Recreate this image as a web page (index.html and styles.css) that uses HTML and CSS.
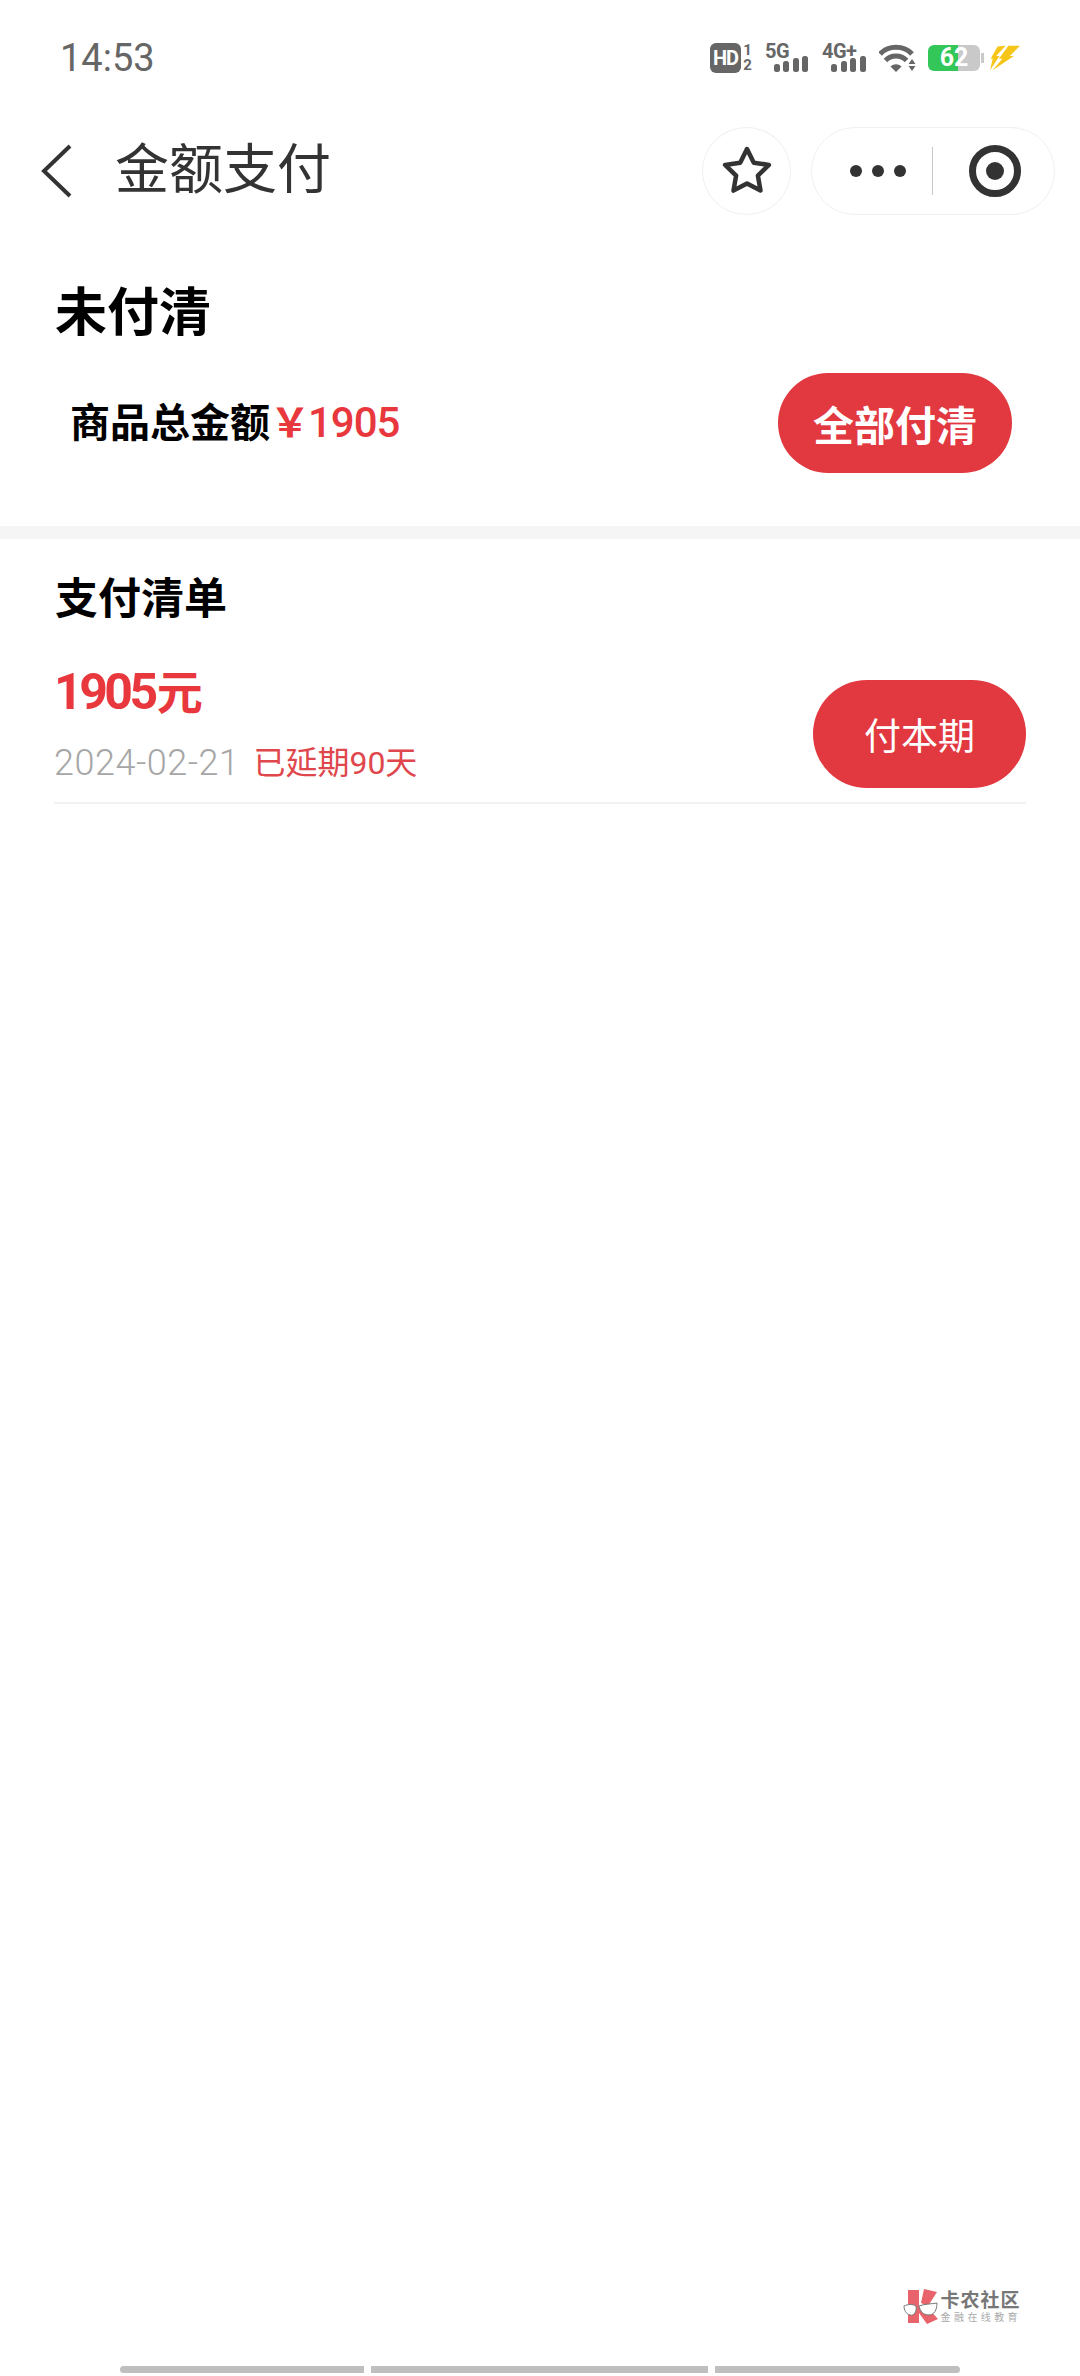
FILE: index.html
```html
<!DOCTYPE html>
<html lang="zh-CN">
<head>
  <meta charset="UTF-8">
  <meta name="viewport" content="width=device-width, initial-scale=1.0">
  <title>金额支付</title>
  <link rel="stylesheet" href="styles.css">
</head>
<body>
  <div class="page">
    <!-- status bar -->
    <div class="status">
      <span class="time">14:53</span>
      <div class="status-icons">
        <span class="hd">HD</span>
        <span class="sim"><span>1</span><span>2</span></span>
        <div class="signal signal-5g">
          <span class="net">5G</span>
          <svg width="44" height="30" viewBox="0 0 44 30">
            <rect x="9" y="21" width="6" height="8" rx="2.5"/>
            <rect x="18" y="18" width="6" height="11" rx="2.5"/>
            <rect x="28" y="15" width="6" height="14" rx="2.5"/>
            <rect x="37" y="13" width="6" height="16" rx="2.5"/>
          </svg>
        </div>
        <div class="signal signal-4g">
          <span class="net">4G+</span>
          <svg width="45" height="30" viewBox="0 0 45 30">
            <rect x="9" y="21" width="6" height="8" rx="2.5"/>
            <rect x="19" y="18" width="6" height="11" rx="2.5"/>
            <rect x="28" y="15" width="6" height="14" rx="2.5"/>
            <rect x="38" y="13" width="6" height="16" rx="2.5"/>
          </svg>
        </div>
        <svg class="wifi" width="38" height="30" viewBox="0 0 38 30">
          <path d="M1 11 C9 2 25 2 33 11" fill="none" stroke="#666" stroke-width="5"/>
          <path d="M6.500 17.500 C12 11.500 22 11.500 27.500 17.500" fill="none" stroke="#666" stroke-width="5"/>
          <path d="M11.500 23.500 C15 20.500 19 20.500 22.500 23.500 L17 29 Z" fill="#666"/>
          <path d="M33 16 L36.5 21 L29.500 21 Z M29.500 23 L36.500 23 L33 28 Z" fill="#666"/>
        </svg>
        <span class="battery">62</span>
        <svg class="bolt" width="30" height="26" viewBox="0 0 88 72">
          <path d="M22 2 L46 0 L18 30 L28 30 L0 72 L8 38 L2 38 Z" fill="#f5c518"/>
          <path d="M54 0 L88 0 L58 30 L70 30 L8 72 L36 38 L26 38 Z" fill="#f5c518"/>
        </svg>
      </div>
    </div>

    <!-- nav bar -->
    <div class="nav">
      <svg class="back" width="31" height="54" viewBox="0 0 31 54">
        <path d="M29 2 L3 27 L29 52" fill="none" stroke="#333" stroke-width="4"/>
      </svg>
      <span class="nav-title">金额支付</span>
      <div class="nav-btn-star">
        <svg width="60" height="60" viewBox="0 0 60 60">
          <path d="M30 8 L36.800 21.700 L51.900 23.900 L40.900 34.600 L43.500 49.600 L30 42.500 L16.500 49.600 L19.100 34.600 L8.100 23.900 L23.200 21.700 Z" fill="none" stroke="#333" stroke-width="4.500" stroke-linejoin="round"/>
        </svg>
      </div>
      <div class="capsule">
        <div class="dots"><i></i><i></i><i></i></div>
        <div class="capsule-line"></div>
        <div class="ring"><i></i></div>
      </div>
    </div>

    <!-- summary -->
    <div class="summary">
      <h1>未付清</h1>
      <div class="summary-row">
        <div class="total">商品总金额<span class="total-num"><span class="yen">￥</span>1905</span></div>
        <button class="btn btn-all">全部付清</button>
      </div>
    </div>

    <div class="gap-bar"></div>

    <!-- bill list -->
    <div class="bills">
      <h2>支付清单</h2>
      <div class="bill">
        <div class="bill-info">
          <div class="bill-amount">1905<span class="bill-unit">元</span></div>
          <div class="bill-meta">
            <span class="bill-date">2024-02-21</span>
            <span class="bill-late">已延期90天</span>
          </div>
        </div>
        <button class="btn btn-one">付本期</button>
      </div>
    </div>

    <!-- watermark -->
    <div class="mark">
      <svg width="36" height="36" viewBox="0 0 36 36">
        <path d="M5 1 L16 1 L16 34 L5 34 Z" fill="#e8636b"/>
        <path d="M18 14 L21 0 L34 3 L25 17 Z" fill="#e8636b"/>
        <path d="M16 18 L24 18 L35 30 L24 35 L16 24 Z" fill="#e8636b"/>
        <path d="M1 17 C5 15 10 15 13 17 C14 23 11 27 7 26 C3 25 1 21 1 17 Z" fill="#fff" stroke="#777" stroke-width="1"/>
        <path d="M16 17 C21 15 28 15 34 14 C34 21 31 26 26 26 C20 26 17 22 16 17 Z" fill="#fff" stroke="#777" stroke-width="1"/>
      </svg>
      <div class="mark-text">
        <div class="mark-name">卡农社区</div>
        <div class="mark-sub">金融在线教育</div>
      </div>
    </div>

    <!-- gesture bars -->
    <div class="home-bars">
      <i class="home-a"></i><i class="home-b"></i><i class="home-c"></i>
    </div>
  </div>
</body>
</html>
```

FILE: styles.css
```css
* {
  box-sizing: border-box;
}
body {
  margin: 0;
  padding: 0;
  background: #fff;
  font-family: Roboto, "Noto Sans CJK SC", sans-serif;
  color: #000;
}
h1, h2 {
  margin: 0;
}
.page {
  width: 1080px;
  height: 2376px;
  display: flex;
  flex-direction: column;
  overflow: hidden;
}

/* status bar */
.status {
  height: 116px;
  padding: 0 60px;
  display: flex;
  align-items: center;
  justify-content: space-between;
}
.time {
  font-size: 38px;
  color: #666;
}
.status-icons {
  display: flex;
  align-items: center;
}
.hd {
  width: 31px;
  height: 30px;
  border-radius: 6px;
  background: #666;
  color: #fff;
  font-size: 20px;
  font-weight: 700;
  line-height: 30px;
  text-align: center;
  letter-spacing: -1px;
}
.sim {
  width: 11px;
  margin-left: 1px;
  display: flex;
  flex-direction: column;
  color: #666;
  font-size: 15px;
  font-weight: 700;
  line-height: 15px;
  text-align: center;
}
.signal {
  position: relative;
  height: 30px;
}
.signal svg {
  display: block;
}
.signal rect {
  fill: #666;
}
.signal-5g {
  margin-left: 12px;
}
.signal-4g {
  margin-left: 13px;
}
.net {
  position: absolute;
  left: 0;
  top: -1px;
  font-size: 20px;
  line-height: 18px;
  font-weight: 700;
  color: #666;
  letter-spacing: -0.5px;
  white-space: nowrap;
}
.wifi {
  margin-left: 12px;
}
.battery {
  position: relative;
  width: 52px;
  height: 26px;
  margin-left: 11px;
  border-radius: 6px;
  background: linear-gradient(to right, #33c759 58%, #c9c9c9 58%);
  color: #fff;
  font-size: 25px;
  font-weight: 700;
  line-height: 26px;
  text-align: center;
}
.battery::after {
  content: "";
  position: absolute;
  right: -4px;
  top: 8px;
  width: 3px;
  height: 10px;
  background: #c9c9c9;
}
.bolt {
  margin-left: 10px;
}

/* nav bar */
.nav {
  height: 88px;
  margin-top: 11px;
  padding: 0 25px 0 41px;
  display: flex;
  align-items: center;
}
.back {
  flex: none;
}
.nav-title {
  margin-left: 43px;
  flex: 1;
  font-size: 54px;
  line-height: 88px;
  color: #333;
}
.nav-btn-star {
  width: 89px;
  height: 88px;
  border: 1px solid #f0f0f0;
  border-radius: 50%;
  display: flex;
  align-items: center;
  justify-content: center;
}
.capsule {
  width: 244px;
  height: 88px;
  margin-left: 20px;
  border: 1px solid #f0f0f0;
  border-radius: 44px;
  display: flex;
  align-items: center;
}
.dots {
  width: 120px;
  padding-left: 12px;
  display: flex;
  justify-content: center;
  gap: 10px;
}
.dots i {
  width: 12px;
  height: 12px;
  border-radius: 50%;
  background: #333;
}
.capsule-line {
  width: 1px;
  height: 48px;
  background: #c8c8c8;
}
.ring {
  width: 52px;
  height: 52px;
  margin-left: 36px;
  border: 7px solid #333;
  border-radius: 50%;
  display: flex;
  align-items: center;
  justify-content: center;
}
.ring i {
  width: 18px;
  height: 18px;
  border-radius: 50%;
  background: #333;
}

/* summary */
.summary {
  padding: 69px 68px 53px 55px;
}
.summary h1 {
  font-size: 52px;
  line-height: 60px;
  font-weight: 700;
}
.summary-row {
  margin-top: 29px;
  padding-left: 15px;
  display: flex;
  align-items: center;
  justify-content: space-between;
}
.total {
  margin-bottom: 6px;
  font-size: 40px;
  font-weight: 700;
  display: flex;
  align-items: center;
}
.total-num {
  color: #e8383d;
  font-size: 42px;
  font-weight: 500;
  letter-spacing: -1px;
}
.yen {
  font-size: 40px;
  font-weight: 700;
  letter-spacing: -2px;
}
.btn {
  border: none;
  padding: 0;
  border-radius: 54px;
  background: #e2383f;
  color: #fff;
  font-family: inherit;
}
.btn-all {
  width: 234px;
  height: 100px;
  font-size: 41px;
  font-weight: 700;
}
.btn-one {
  width: 213px;
  height: 108px;
  margin-top: 18px;
  font-size: 37px;
}
.gap-bar {
  height: 13px;
  background: #f5f5f5;
}

/* bill list */
.bills {
  padding: 35px 54px 0 55px;
}
.bills h2 {
  font-size: 43px;
  line-height: 50px;
  font-weight: 700;
}
.bill {
  margin-left: -1px;
  padding: 38px 0 14px;
  border-bottom: 2px solid #f2f2f2;
  display: flex;
  align-items: flex-start;
  justify-content: space-between;
}
.bill-amount {
  color: #e8383d;
  font-size: 50px;
  line-height: 60px;
  font-weight: 700;
  letter-spacing: -3.5px;
}
.bill-unit {
  font-size: 46px;
  letter-spacing: 0;
  margin-left: 2px;
}
.bill-meta {
  margin-top: 20px;
  line-height: 40px;
  display: flex;
  align-items: center;
  gap: 14px;
}
.bill-date {
  color: #a6a6a6;
  font-size: 36px;
  font-weight: 300;
  letter-spacing: 0.5px;
}
.bill-late {
  color: #e0474c;
  font-size: 32px;
}

/* watermark */
.mark {
  margin-top: auto;
  margin-bottom: 41px;
  padding-right: 59px;
  align-self: flex-end;
  display: flex;
  align-items: center;
  gap: 2px;
}
.mark-name {
  font-size: 19px;
  line-height: 21px;
  font-weight: 700;
  color: #777;
  letter-spacing: 1px;
}
.mark-sub {
  font-size: 10px;
  line-height: 13px;
  color: #aaa;
  letter-spacing: 3.4px;
}

/* gesture bars */
.home-bars {
  height: 7px;
  margin: 0 120px 3px;
  display: flex;
  gap: 7px;
}
.home-bars i {
  height: 7px;
  background: #bfbfbf;
}
.home-a {
  width: 244px;
  border-radius: 4px 0 0 4px;
}
.home-b {
  width: 337px;
}
.home-c {
  width: 245px;
  border-radius: 0 4px 4px 0;
}
```
